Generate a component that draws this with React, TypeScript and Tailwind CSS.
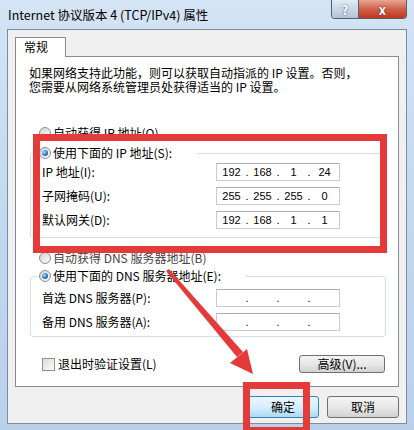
import { Fragment } from 'react';

function Radio({ checked }: { checked?: boolean }) {
  return (
    <span className="flex h-[12px] w-[12px] shrink-0 items-center justify-center rounded-full border border-[#8e8f8f] bg-gradient-to-br from-[#d4d4d4] to-[#fcfcfc]">
      {checked && (
        <span className="h-[6px] w-[6px] rounded-full bg-[radial-gradient(circle_at_35%_35%,#a8e4ff,#2a78bd_55%,#0d3f75)]" />
      )}
    </span>
  );
}

function IpBox({ parts }: { parts: string[] }) {
  return (
    <div className="flex h-[18px] w-[124px] items-center border border-[#c9ccd1] border-t-[#abadb3] bg-white px-px font-['Liberation_Sans',Arial,sans-serif] text-[11px] leading-[16px]">
      {parts.map((p, i) => (
        <Fragment key={i}>
          {i > 0 && <span className="w-[4px] text-center">.</span>}
          <span className="flex-1 text-center">{p}</span>
        </Fragment>
      ))}
    </div>
  );
}

function Row({ label, parts }: { label: string; parts: string[] }) {
  return (
    <div className="flex h-[18px] items-center">
      <span className="w-[174px] text-[12px] leading-[14px]">{label}</span>
      <IpBox parts={parts} />
    </div>
  );
}

const btn =
  'flex items-center justify-center rounded-[3px] border text-[12px] leading-[14px] text-black';

export default function App() {
  return (
    <div className="relative flex h-[430px] w-[414px] flex-col overflow-hidden bg-gradient-to-b from-[#d4e4f5] via-[#c3d8ee] to-[#bad1ea] font-['Noto_Sans_CJK_SC','Noto_Sans',sans-serif] text-black">
      {/* 标题栏 */}
      <div className="flex h-[29px] shrink-0 items-start">
        <div className="whitespace-nowrap pl-[8px] pt-[6px] text-[12.5px] leading-[18px]">
          Internet 协议版本 4 (TCP/IPv4) 属性
        </div>
        <div className="ml-auto mr-[7px] flex h-[19px] overflow-hidden rounded-b-[4px] border border-t-0 border-[#55606e]">
          <div className="flex w-[27px] items-center justify-center border-r border-[#55606e] bg-gradient-to-b from-[#e3ebf5] to-[#b2c3d8] text-[13px] font-bold leading-none text-white [text-shadow:0_0_2px_#3b4756]">
            ?
          </div>
          <div className="flex w-[47px] items-center justify-center bg-gradient-to-b from-[#e9a597] via-[#d0604a] to-[#c0351d] text-[13px] font-bold leading-none text-white [text-shadow:0_0_2px_#5a1208]">
            x
          </div>
        </div>
      </div>

      {/* 客户区 */}
      <div className="mx-[7px] flex h-[395px] flex-col border border-[#7b8ca3] bg-[#f0f0f0] px-[7px] pt-[7px]">
        <div className="relative z-10 h-[20px] w-[51px] border border-b-0 border-[#898c95] bg-white pl-[8px] text-[12px] leading-[18px]">
          常规
        </div>
        <div className="-mt-px flex h-[331px] flex-col border border-[#898c95] bg-white">
          <div className="whitespace-nowrap pl-[13px] pt-[9px] text-[12px] leading-[14px]">
            <div>如果网络支持此功能，则可以获取自动指派的 IP 设置。否则，</div>
            <div>您需要从网络系统管理员处获得适当的 IP 设置。</div>
          </div>

          <div className="ml-[23px] mt-[32px] flex h-[14px] items-center gap-[2px] text-[12px]">
            <Radio />
            <span>自动获得 IP 地址(O)</span>
          </div>

          <fieldset className="ml-[14px] mt-[6px] w-[356px] rounded-[3px] border border-[#d5dfe5] pb-[8px]">
            <legend className="ml-[7px] pl-px pr-[25px]">
              <span className="flex h-[14px] items-center gap-[2px] text-[12px]">
                <Radio checked />
                <span>使用下面的 IP 地址(S):</span>
              </span>
            </legend>
            <div className="flex flex-col gap-[6px] pl-[11px] pt-[3px]">
              <Row label="IP 地址(I):" parts={['192', '168', '1', '24']} />
              <Row label="子网掩码(U):" parts={['255', '255', '255', '0']} />
              <Row label="默认网关(D):" parts={['192', '168', '1', '1']} />
            </div>
          </fieldset>

          <div className="ml-[23px] mt-[13px] flex h-[14px] items-center gap-[2px] text-[12px] text-[#444]">
            <Radio />
            <span>自动获得 DNS 服务器地址(B)</span>
          </div>

          <fieldset className="ml-[14px] mt-[4px] w-[356px] rounded-[3px] border border-[#d5dfe5] pb-[5px]">
            <legend className="ml-[7px] pl-px pr-[25px]">
              <span className="flex h-[14px] items-center gap-[2px] text-[12px]">
                <Radio checked />
                <span>使用下面的 DNS 服务器地址(E):</span>
              </span>
            </legend>
            <div className="flex flex-col gap-[6px] pl-[11px] pt-[6px]">
              <Row label="首选 DNS 服务器(P):" parts={['', '', '', '']} />
              <Row label="备用 DNS 服务器(A):" parts={['', '', '', '']} />
            </div>
          </fieldset>

          <div className="mt-[18px] flex h-[18px] items-center">
            <span className="ml-[26px] h-[13px] w-[13px] border border-[#8f8f8f] bg-gradient-to-br from-[#dcdcdc] to-[#fbfbfb]" />
            <span className="ml-[3px] text-[12px]">退出时验证设置(L)</span>
            <button className={`${btn} ml-auto mr-[13px] h-[18px] w-[86px] border-[#707070] bg-gradient-to-b from-[#f3f3f3] via-[#e8e8e8] to-[#d2d2d2]`}>
              高级(V)...
            </button>
          </div>
        </div>

        <div className="mt-[9px] flex justify-end gap-[8px]">
          <button className={`${btn} h-[22px] w-[72px] border-[#3c7fb1] bg-gradient-to-b from-[#eaf6fd] via-[#d7effc] to-[#a9daf5]`}>
            确定
          </button>
          <button className={`${btn} h-[22px] w-[72px] border-[#707070] bg-gradient-to-b from-[#f3f3f3] via-[#e8e8e8] to-[#d2d2d2]`}>
            取消
          </button>
        </div>
      </div>

      {/* 标注 */}
      <div className="pointer-events-none absolute left-[33px] top-[134px] h-[119px] w-[354px] border-[7px] border-[#e53a3a]" />
      <div className="pointer-events-none absolute left-[243px] top-[382px] h-[52px] w-[67px] border-[7px] border-[#e53a3a]" />
      <svg className="pointer-events-none absolute left-0 top-0" width="414" height="430">
        <polygon points="166,271 169,269 243,352 237,357" fill="#e53a3a" />
        <polygon points="253,374 230,363 247,349" fill="#e53a3a" />
      </svg>
    </div>
  );
}
